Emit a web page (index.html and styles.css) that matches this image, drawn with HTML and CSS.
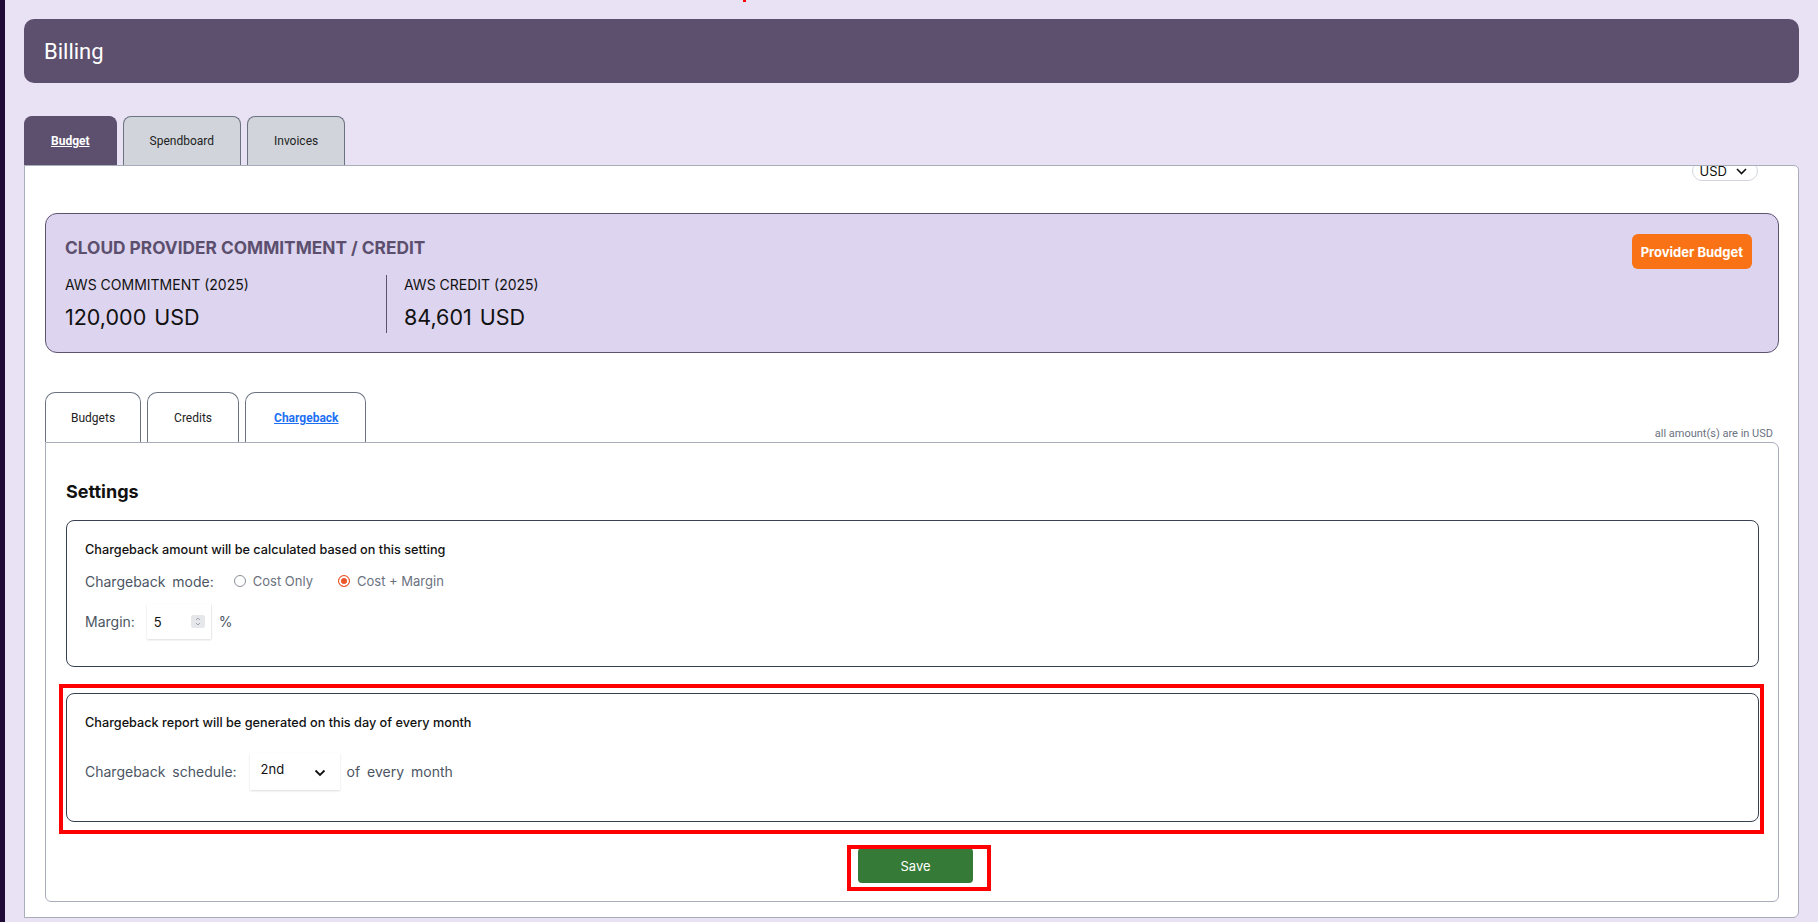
FILE: index.html
```html
<!DOCTYPE html>
<html lang="en">
<head>
    <meta charset="UTF-8" />
    <meta name="viewport" content="width=device-width, initial-scale=1.0"/>
    <title>Billing</title>
    <link rel="stylesheet" href="styles.css">
</head>
<body>
    <div class="rail"></div>
    <div class="mark"></div>
    <main class="main">
        <header class="page-header">Billing</header>

        <nav class="tabs">
            <div class="tab active">Budget</div>
            <div class="tab">Spendboard</div>
            <div class="tab">Invoices</div>
        </nav>

        <section class="panel">
            <div class="currency-row">
                <div class="currency">
                    USD
                    <svg width="11" height="7" viewBox="0 0 11 7"><path d="M1 1l4.5 4.5L10 1" fill="none" stroke="#111" stroke-width="1.6"/></svg>
                </div>
            </div>

            <div class="provider-card">
                <div class="provider-info">
                    <div class="provider-title">CLOUD PROVIDER COMMITMENT / CREDIT</div>
                    <div class="stats">
                        <div class="stat">
                            <div class="stat-label">AWS COMMITMENT (2025)</div>
                            <div class="stat-value">120,000 USD</div>
                        </div>
                        <div class="stat">
                            <div class="stat-label">AWS CREDIT (2025)</div>
                            <div class="stat-value">84,601 USD</div>
                        </div>
                    </div>
                </div>
                <button class="provider-btn">Provider Budget</button>
            </div>

            <div class="subtabs">
                <div class="subtab">Budgets</div>
                <div class="subtab">Credits</div>
                <div class="subtab active">Chargeback</div>
                <div class="note">all amount(s) are in USD</div>
            </div>

            <div class="subpanel">
                <h3 class="settings-title">Settings</h3>

                <div class="setting-box mode-box">
                    <div class="setting-desc">Chargeback amount will be calculated based on this setting</div>
                    <div class="setting-row mode-row">
                        <span class="field-label">Chargeback mode:</span>
                        <span class="radio"></span>
                        <span class="radio-label">Cost Only</span>
                        <span class="radio checked"></span>
                        <span class="radio-label">Cost + Margin</span>
                    </div>
                    <div class="setting-row margin-row">
                        <span class="field-label">Margin:</span>
                        <div class="num-input">
                            <span>5</span>
                            <span class="spinner">
                                <svg width="14" height="13" viewBox="0 0 14 13"><path d="M5 5l2-2 2 2M5 8l2 2 2-2" fill="none" stroke="#9ca3af" stroke-width="1"/></svg>
                            </span>
                        </div>
                        <span class="field-label">%</span>
                    </div>
                </div>

                <div class="highlight-wrap">
                    <div class="setting-box schedule-box">
                        <div class="setting-desc">Chargeback report will be generated on this day of every month</div>
                        <div class="setting-row schedule-row">
                            <span class="field-label">Chargeback schedule:</span>
                            <div class="day-select">
                                <span>2nd</span>
                                <svg width="12" height="8" viewBox="0 0 12 8"><path d="M1.5 1.5L6 6l4.5-4.5" fill="none" stroke="#111" stroke-width="1.8"/></svg>
                            </div>
                            <span class="field-label">of every month</span>
                        </div>
                    </div>
                    <div class="red-box schedule-red"></div>
                </div>

                <div class="save-row">
                    <div class="highlight-wrap">
                        <button class="save-btn">Save</button>
                        <div class="red-box save-red"></div>
                    </div>
                </div>
            </div>
        </section>
    </main>
</body>
</html>
```

FILE: styles.css
```css
body {
    margin: 0;
    display: flex;
    min-height: 922px;
    background-color: #e8e2f4;
    font-family: Inter, "Noto Sans", sans-serif;
    color: #111;
}
.rail {
    width: 5px;
    background-color: #1f0b35;
}
.mark {
    position: absolute;
    left: 743px;
    top: 0;
    width: 3px;
    height: 2px;
    background-color: #ff0000;
}
.main {
    flex: 1;
    padding: 19px 19px 4px 19px;
}
.page-header {
    height: 64px;
    box-sizing: border-box;
    display: flex;
    align-items: center;
    padding-left: 20px;
    background-color: #5d4f6e;
    border-radius: 10px;
    color: white;
    font-family: Roboto, sans-serif;
    font-size: 22px;
}
.tabs {
    display: flex;
    gap: 6px;
    margin-top: 33px;
}
.tab {
    height: 49px;
    box-sizing: border-box;
    display: flex;
    align-items: center;
    justify-content: center;
    padding: 0 26px;
    background-color: #d1d5db;
    border: 1px solid #6b7280;
    border-bottom: none;
    border-radius: 8px 8px 0 0;
    font-family: Roboto, sans-serif;
    font-size: 12px;
    color: #222;
}
.tab.active {
    background-color: #5d4f6e;
    border-color: #5d4f6e;
    color: white;
    font-weight: bold;
    text-decoration: underline;
}
.panel {
    background-color: white;
    border: 1px solid #a7adb9;
    border-radius: 0 5px 6px 0;
    padding: 0 19px 15px 20px;
    overflow: hidden;
}
.currency-row {
    height: 47px;
    display: flex;
    justify-content: flex-end;
    align-items: flex-start;
}
.currency {
    margin-top: -5px;
    margin-right: 21px;
    height: 20px;
    box-sizing: border-box;
    display: flex;
    align-items: center;
    gap: 9px;
    padding: 0 10px 0 7px;
    border: 1px solid #d1d5db;
    border-radius: 10px;
    font-size: 13px;
}
.provider-card {
    height: 140px;
    box-sizing: border-box;
    display: flex;
    justify-content: space-between;
    padding: 22px 26px 0 19px;
    background-color: #ddd5ef;
    border: 1px solid #5e5470;
    border-radius: 12px;
}
.provider-title {
    font-size: 17.3px;
    line-height: 24px;
    font-weight: 700;
    color: #5c4f6e;
}
.stats {
    display: flex;
    margin-top: 15px;
}
.stat {
    padding-bottom: 2px;
}
.stat:first-child {
    width: 321px;
    border-right: 1px solid #5e5470;
}
.stat + .stat {
    padding-left: 17px;
}
.stat-label {
    font-size: 14px;
    line-height: 20px;
}
.stat-value {
    margin-top: 8px;
    font-size: 21.5px;
    line-height: 28px;
    word-spacing: 2px;
}
.provider-btn {
    margin-top: -2px;
    height: 35px;
    padding: 0 9px;
    background-color: #f97316;
    color: white;
    border: none;
    border-radius: 6px;
    font-family: Inter, sans-serif;
    font-size: 13px;
    font-weight: 700;
}
.subtabs {
    display: flex;
    gap: 6px;
    margin-top: 39px;
}
.subtab {
    height: 50px;
    box-sizing: border-box;
    display: flex;
    align-items: center;
    justify-content: center;
    padding: 0 25px;
    background-color: white;
    border: 1px solid #6b7280;
    border-bottom: none;
    border-radius: 10px 10px 0 0;
    font-family: Roboto, sans-serif;
    font-size: 12px;
    color: #222;
}
.subtab:nth-child(2) {
    padding: 0 26px;
}
.subtab.active {
    padding: 0 27px 0 28px;
    color: #1d6ff2;
    font-weight: bold;
    text-decoration: underline;
}
.note {
    margin-left: auto;
    margin-right: 6px;
    align-self: flex-end;
    padding-bottom: 2px;
    font-family: Roboto, sans-serif;
    font-size: 11px;
    line-height: 13px;
    color: #6b7280;
}
.subpanel {
    border: 1px solid #a7adb9;
    border-radius: 0 7px 6px 6px;
    padding: 37px 19px 18px 20px;
}
.settings-title {
    margin: 0 0 16px 0;
    font-size: 18px;
    line-height: 24px;
    font-weight: 700;
}
.setting-box {
    box-sizing: border-box;
    padding: 20px 18px 0 18px;
    border: 1px solid #374151;
    border-radius: 8px;
}
.mode-box {
    height: 147px;
}
.schedule-box {
    height: 129px;
}
.setting-desc {
    font-size: 12.7px;
    line-height: 18px;
    font-weight: 500;
}
.setting-row {
    display: flex;
    align-items: center;
}
.field-label {
    font-size: 14px;
    color: #4b5563;
    word-spacing: 3px;
}
.mode-row {
    height: 20px;
    margin-top: 12px;
}
.mode-row .field-label {
    margin-right: 20px;
}
.radio {
    width: 12px;
    height: 12px;
    box-sizing: border-box;
    border: 1px solid #8b8f99;
    border-radius: 50%;
    margin-right: 7px;
}
.radio.checked {
    border: 1.5px solid #e8582a;
    background-color: #e8582a;
    box-shadow: inset 0 0 0 2px white;
}
.radio-label {
    font-size: 13px;
    color: #6b7280;
    margin-right: 25px;
}
.margin-row {
    margin-top: 13px;
}
.num-input {
    width: 64px;
    height: 35px;
    box-sizing: border-box;
    display: flex;
    align-items: center;
    justify-content: space-between;
    margin: 0 8px 0 12px;
    padding: 0 6px 0 7px;
    box-shadow: 0 1px 2px rgba(0, 0, 0, 0.14), 1px 0 1px rgba(0, 0, 0, 0.04);
    font-size: 13px;
}
.spinner {
    display: flex;
    background-color: #e5e7eb;
    border-radius: 2px;
}
.schedule-row {
    margin-top: 21px;
}
.day-select {
    width: 90px;
    height: 37px;
    box-sizing: border-box;
    display: flex;
    justify-content: space-between;
    align-items: center;
    margin: 0 7px 0 13px;
    padding: 0 14px 0 11px;
    box-shadow: 0 1px 2px rgba(0, 0, 0, 0.14);
    font-size: 13px;
}
.day-select span {
    margin-top: -6px;
}
.day-select svg {
    margin-top: 3px;
}
.highlight-wrap {
    position: relative;
    margin-top: 26px;
}
.red-box {
    position: absolute;
    border: 4px solid #ff0000;
    pointer-events: none;
}
.schedule-red {
    left: -7px;
    top: -9px;
    right: -5px;
    bottom: -12px;
}
.save-row {
    display: flex;
    justify-content: center;
}
.save-row .highlight-wrap {
    margin-left: 6px;
}
.save-red {
    left: -11px;
    top: -3px;
    right: -18px;
    bottom: -8px;
}
.save-btn {
    display: block;
    width: 115px;
    height: 35px;
    background-color: #367a37;
    color: white;
    border: none;
    border-radius: 4px;
    font-family: Inter, sans-serif;
    font-size: 13px;
}
```
